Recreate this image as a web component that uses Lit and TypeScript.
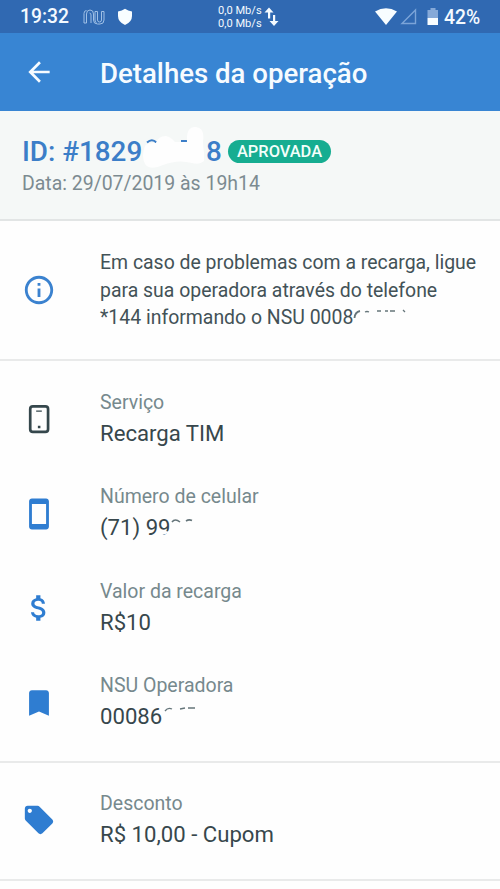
import { LitElement, html, css, svg } from "lit";
import { customElement, property } from "lit/decorators.js";

const icons: Record<string, unknown> = {
  back: svg`<path d="M20 11H7.83l5.59-5.59L12 4l-8 8 8 8 1.410-1.410L7.83 13H20v-2z"/>`,
  info: svg`<path d="M11 17h2v-6h-2v6zm1-15C6.48 2 2 6.48 2 12s4.48 10 10 10 10-4.480 10-10S17.52 2 12 2zm0 18c-4.410 0-8-3.590-8-8s3.590-8 8-8 8 3.590 8 8-3.590 8-8 8zM11 9h2V7h-2v2z"/>`,
  service: svg`<rect x="5.800" y="3.100" width="12.600" height="18" rx="1.900" fill="none" stroke="currentColor" stroke-width="1.900"/><path d="M10 6h4v.9h-4zM11.200 16.800h1.800v1.700h-1.800z"/>`,
  phone: svg`<path d="M17 1.010 7 1c-1.100 0-2 .9-2 2v18c0 1.100.9 2 2 2h10c1.100 0 2-.9 2-2V3c0-1.100-.9-1.990-2-1.990zM17 19H7V5h10v14z"/>`,
  money: svg`<path d="M11.800 10.900c-2.270-.59-3-1.200-3-2.150 0-1.090 1.010-1.850 2.700-1.850 1.780 0 2.440.85 2.500 2.100h2.210c-.07-1.720-1.120-3.300-3.210-3.810V3h-3v2.160c-1.940.42-3.500 1.680-3.500 3.610 0 2.310 1.910 3.460 4.700 4.130 2.500.6 3 1.480 3 2.410 0 .69-.49 1.790-2.700 1.790-2.060 0-2.870-.92-2.980-2.100h-2.200c.12 2.190 1.760 3.420 3.680 3.830V21h3v-2.150c1.950-.37 3.500-1.500 3.500-3.550 0-2.840-2.430-3.810-4.700-4.400z"/>`,
  bookmark: svg`<path d="M17 3H7c-1.100 0-2 .9-2 2v16l7-3 7 3V5c0-1.100-.9-2-2-2z"/>`,
  tag: svg`<path d="M21.410 11.580l-9-9C12.050 2.220 11.550 2 11 2H4c-1.100 0-2 .9-2 2v7c0 .55.22 1.050.59 1.420l9 9c.36.36.86.58 1.410.58s1.050-.22 1.410-.59l7-7c.37-.36.59-.86.59-1.410s-.23-1.060-.59-1.420zM5.500 7C4.670 7 4 6.330 4 5.500S4.670 4 5.500 4 7 4.670 7 5.500 6.330 7 5.500 7z"/>`,
};

@customElement("detail-row")
export class DetailRow extends LitElement {
  @property() icon = "";
  @property() label = "";
  static styles = css`
    :host { display: flex; align-items: center; height: 94.5px; }
    .icon { width: 34px; height: 34px; margin: 0 44px 0 22px; fill: currentColor; color: #2f7dd1; flex: none; }
    .icon.service { color: #35474c; }
    .text { padding-bottom: 3px; }
    .label { font-size: 19.5px; line-height: 31px; color: #76898d; }
    .value { font-size: 22.15px; line-height: 31px; color: #37474c; white-space: pre; display: flex; }
  `;
  render() {
    return html`
      <svg class="icon ${this.icon}" viewBox="0 0 24 24">${icons[this.icon]}</svg>
      <div class="text">
        <div class="label">${this.label}</div>
        <div class="value"><slot></slot></div>
      </div>`;
  }
}

@customElement("app-root")
export class AppRoot extends LitElement {
  static styles = css`
    :host { display: block; height: 889px; overflow: hidden; background: #fefefe; font-family: Roboto, sans-serif; color: #37474c; }
    svg { display: block; flex: none; }
    .status { height: 33px; background: #3069b2; color: #f4faff; display: flex; align-items: center; font-size: 19.3px; font-weight: 500; }
    .clock { margin-left: 20px; width: 63px; line-height: 34px; padding-top: 1px; }
    .rate { margin-left: 85px; width: 46px; font-size: 11.1px; line-height: 12.5px; padding-top: 2px; font-weight: 400; white-space: nowrap; }
    .battery { margin-left: 5px; line-height: 34px; padding-top: 2px; }
    .bar { height: 78px; background: #3885d3; color: #f6fbff; display: flex; align-items: center; }
    .back { width: 32px; height: 32px; margin: 0 45px 0 23px; fill: currentColor; }
    .title { font-size: 27.6px; font-weight: 500; line-height: 36px; padding-top: 3px; }
    .summary { box-sizing: border-box; height: 110px; padding: 23px 0 0 22px; background: #f5f8f7; border-bottom: 2px solid #e2e5e5; }
    .id { height: 35px; display: flex; align-items: center; color: #3c7ec8; font-size: 27.8px; font-weight: 500; line-height: 35px; position: relative; }
    .digits { width: 184px; white-space: nowrap; }
    .last { width: 16px; }
    .smudge { position: absolute; left: 119px; top: -10px; }
    .badge { margin-left: 6px; width: 103px; height: 23px; border-radius: 12px; background: #16ad91; color: #f3fffb; font-size: 16.4px; line-height: 24px; text-align: center; }
    .date { color: #7c8b91; font-size: 19.45px; line-height: 28px; padding-top: 1px; }
    .notice { box-sizing: border-box; height: 140px; border-bottom: 2px solid #e9eaea; display: flex; align-items: center; }
    .notice-icon { width: 34px; height: 34px; margin: 0 44px 0 22px; fill: #3b82cf; }
    .notice-text { font-size: 19.43px; line-height: 27.8px; padding-top: 1px; white-space: nowrap; color: #435257; }
    .line { display: flex; }
    .details { box-sizing: border-box; height: 402px; padding-top: 11px; border-bottom: 2px solid #e9eaea; }
    .discount { box-sizing: border-box; height: 118px; padding-top: 10px; border-bottom: 2px solid #e9eaea; }
    .trace { fill: none; stroke: #65757a; stroke-width: 1.3; overflow: visible; position: relative; }
  `;
  render() {
    return html`
      <div class="status">
        <span class="clock">19:32</span>
        <svg width="22" height="18" viewBox="0 0 22 18" fill="none" stroke="#9fc0e6" stroke-width="1"><path d="M1 15V5.500Q1 2.500 3.500 2.500M1 15h2.500V6Q3.500 2 7 2t3.500 4v6q0 4 4 4h2.500q4 0 4-4V3.500h-2.500V12q0 2-2 2t-2-2V3.500h-2.500V12q0 2.500 2 3.500M8 15V7q0-2-1.500-2"/></svg>
        <svg width="16" height="18" viewBox="0 0 16 18" style="margin-left:12px" fill="#f8fdff"><path d="M8 .8Q11 3 15 3.400V8q0 6-7 9Q1 14 1 8V3.400Q5 3 8 .8z"/></svg>
        <div class="rate">0,0 Mb/s<br>0,0 Mb/s</div>
        <svg width="16" height="22" viewBox="0 0 16 22" fill="#f4faff"><path d="M5 1.500.5 6.500H4v6h2.200v-6h3.300zM9 9h2.200v6h3.300L10 20l-4.500-5H9z"/></svg>
        <svg width="22" height="18" viewBox="0 0 22 18" style="margin-left:95px" fill="#f8fdff"><path d="M0 3.500Q11-3 22 3.500L11 17z"/></svg>
        <svg width="17" height="17" viewBox="0 0 17 17" style="margin-left:3px" fill="none" stroke="#7ba4d8" stroke-width="1.400"><path d="M15.500 2v13.500H2z"/></svg>
        <svg width="12" height="19" viewBox="0 0 12 19" style="margin-left:10px"><path fill="#85a9d8" d="M3.500 1h5v2H11v8H0.500V3h3z"/><path fill="#f8fdff" d="M.5 11H11v7H.5z"/></svg>
        <span class="battery">42%</span>
      </div>
      <div class="bar">
        <svg class="back" viewBox="0 0 24 24">${icons.back}</svg>
        <div class="title">Detalhes da operação</div>
      </div>
      <div class="summary">
        <div class="id">
          <span class="digits">ID: #1829</span>
          <span class="last">8</span>
          <span class="badge">APROVADA</span>
          <svg class="smudge" width="66" height="45" viewBox="0 0 66 45"><path d="M6 18.500q5-4.500 9.500 0M40 17h9" fill="none" stroke="#3c7ec8" stroke-width="2"/><path fill="#fefefe" d="M4 22Q5 19 15 19 17 12 25 12q5 1 9 6h12Q45 2 55 3q9 1 7 14 0 6 1 12v8q-4 4-12 2-14-4-29 2Q9 47 4 40 0 32 4 22z"/></svg>
        </div>
        <div class="date">Data: 29/07/2019 às 19h14</div>
      </div>
      <div class="notice">
        <svg class="notice-icon" viewBox="0 0 24 24">${icons.info}</svg>
        <div class="notice-text">
          <div>Em caso de problemas com a recarga, ligue</div>
          <div>para sua operadora através do telefone</div>
          <div class="line">*144 informando o NSU 0008<svg class="trace" width="60" height="28" viewBox="0 0 60 28"><path stroke-width="1.800" d="M1.500 14Q2 8 7 7"/><path d="M12 8q2-1 4 0M24 7h4M32 7h3M37 7h5M50 6l2 2"/></svg></div>
        </div>
      </div>
      <div class="details">
        <detail-row icon="service" label="Serviço">Recarga TIM</detail-row>
        <detail-row icon="phone" label="Número de celular">(71) 99<svg class="trace" width="26" height="31" viewBox="0 0 26 31"><path fill="#fefefe" stroke="none" d="M-13 18.500h6l4 1 4-5v11h-6l1-4-9 3z"/><path stroke-width="1.600" d="M1 10q3-4 8 0M15 9q3-2 6-.5"/></svg></detail-row>
        <detail-row icon="money" label="Valor da recarga">R$10</detail-row>
        <detail-row icon="bookmark" label="NSU Operadora">00086<svg class="trace" width="38" height="31" viewBox="0 0 38 31"><path d="M3 10q3-4 7-2M18 8l5-1M26 7h7"/></svg></detail-row>
      </div>
      <div class="discount">
        <detail-row icon="tag" label="Desconto">R$ 10,00 - Cupom</detail-row>
      </div>`;
  }
}
